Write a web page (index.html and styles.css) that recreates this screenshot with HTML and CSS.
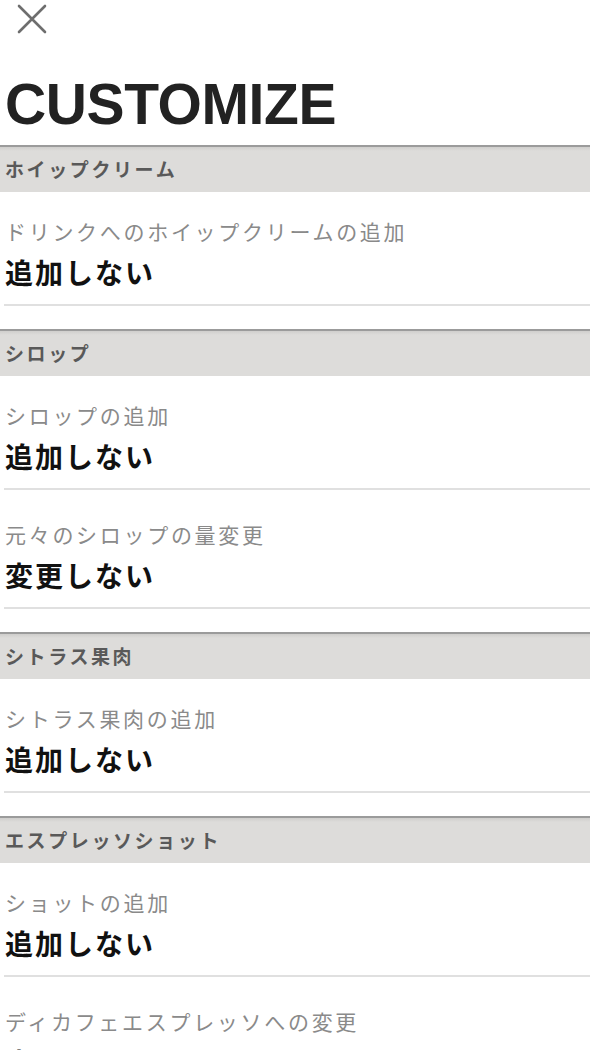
FILE: index.html
```html
<!DOCTYPE html>
<html lang="ja">
<head>
<meta charset="utf-8">
<title>Customize</title>
<link rel="stylesheet" href="styles.css">
</head>
<body>
<div class="top">
  <button class="close" aria-label="close">
    <svg width="30" height="30" viewBox="0 0 30 30"><path d="M2 2 L28 28 M28 2 L2 28" stroke="#6e6e6e" stroke-width="2.6" stroke-linecap="round" fill="none"/></svg>
  </button>
</div>
<h1 class="title">CUSTOMIZE</h1>

<section class="sec">
  <h2 class="sec-head">ホイップクリーム</h2>
  <div class="item"><div class="label">ドリンクへのホイップクリームの追加</div><div class="value">追加しない</div></div>
</section>

<section class="sec">
  <h2 class="sec-head">シロップ</h2>
  <div class="item"><div class="label">シロップの追加</div><div class="value">追加しない</div></div>
  <div class="item"><div class="label">元々のシロップの量変更</div><div class="value">変更しない</div></div>
</section>

<section class="sec">
  <h2 class="sec-head">シトラス果肉</h2>
  <div class="item"><div class="label">シトラス果肉の追加</div><div class="value">追加しない</div></div>
</section>

<section class="sec">
  <h2 class="sec-head">エスプレッソショット</h2>
  <div class="item"><div class="label">ショットの追加</div><div class="value">追加しない</div></div>
  <div class="item"><div class="label">ディカフェエスプレッソへの変更</div><div class="value">変更しない</div></div>
</section>
</body>
</html>
```

FILE: styles.css
```css
html, body {
  margin: 0;
  padding: 0;
  background: #ffffff;
}
body {
  width: 590px;
  font-family: "Noto Sans CJK JP", "Noto Sans", sans-serif;
  overflow: hidden;
}
.top {
  height: 76px;
  padding-left: 17px;
  padding-top: 4px;
  box-sizing: border-box;
}
.close {
  display: block;
  padding: 0;
  margin: 0;
  border: 0;
  background: none;
  width: 30px;
  height: 30px;
}
.close svg { display: block; }
.title {
  margin: 0 0 12px 0;
  padding-left: 5px;
  font-family: "Liberation Sans", Arial, sans-serif;
  font-weight: 700;
  font-size: 57px;
  line-height: 57px;
  letter-spacing: -0.4px;
  color: #222222;
}
.sec {
  margin-bottom: 23px;
}
.sec-head {
  margin: 0;
  height: 45px;
  line-height: 44px;
  border-top: 2px solid #9b9b9b;
  background: linear-gradient(#cfcecc 0, #dddcda 4px, #dddcda 100%);
  padding-left: 5px;
  font-size: 19px;
  font-weight: 700;
  letter-spacing: 2.6px;
  color: #595959;
}
.item {
  margin-left: 4px;
  padding: 29px 0 14px 1px;
  border-bottom: 2px solid #e0e0e0;
}
.item:first-of-type {
  padding-top: 24px;
}
.label {
  font-size: 21px;
  line-height: 30px;
  letter-spacing: 2.7px;
  color: #8a8a8a;
  white-space: nowrap;
}
.value {
  margin-top: 8px;
  font-size: 28px;
  line-height: 36px;
  font-weight: 700;
  letter-spacing: 2px;
  color: #111111;
  white-space: nowrap;
}
```
